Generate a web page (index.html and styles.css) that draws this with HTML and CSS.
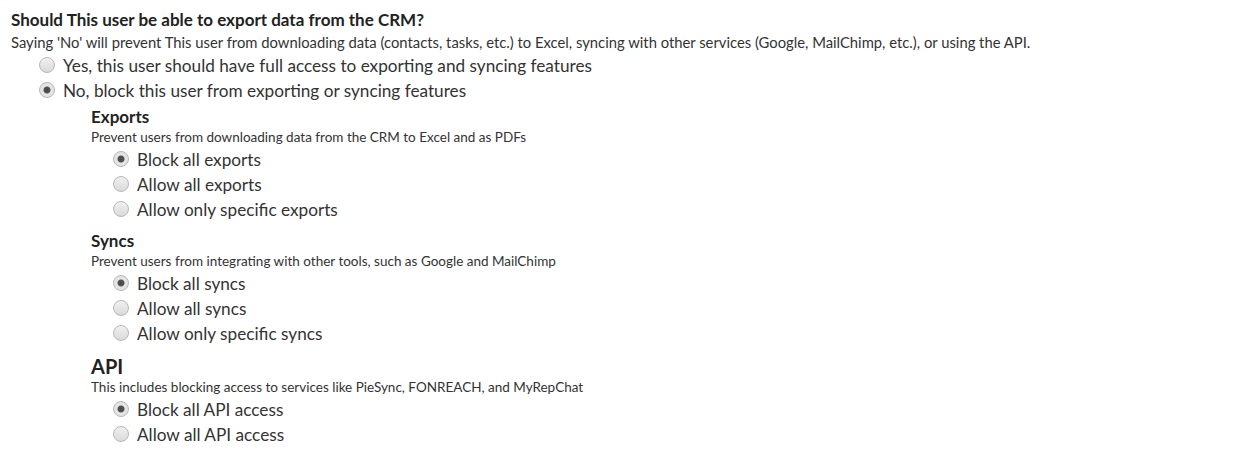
FILE: index.html
```html
<!DOCTYPE html>
<html lang="en">
<head>
  <meta charset="UTF-8">
  <link rel="stylesheet" href="styles.css">
  <title>Export permissions</title>
</head>
<body>
  <div class="question">
    <h1 class="title">Should This user be able to export data from the CRM?</h1>
    <p class="desc">Saying 'No' will prevent This user from downloading data (contacts, tasks, etc.) to Excel, syncing with other services (Google, MailChimp, etc.), or using the API.</p>
    <div class="options">
      <label class="option"><input type="radio" name="export"> Yes, this user should have full access to exporting and syncing features</label>
      <label class="option"><input type="radio" name="export" checked> No, block this user from exporting or syncing features</label>
    </div>

    <div class="details">
      <div class="section">
        <h2 class="sub">Exports</h2>
        <p class="subdesc">Prevent users from downloading data from the CRM to Excel and as PDFs</p>
        <div class="options">
          <label class="option"><input type="radio" name="exports" checked> Block all exports</label>
          <label class="option"><input type="radio" name="exports"> Allow all exports</label>
          <label class="option"><input type="radio" name="exports"> Allow only specific exports</label>
        </div>
      </div>
      <div class="section">
        <h2 class="sub">Syncs</h2>
        <p class="subdesc">Prevent users from integrating with other tools, such as Google and MailChimp</p>
        <div class="options">
          <label class="option"><input type="radio" name="syncs" checked> Block all syncs</label>
          <label class="option"><input type="radio" name="syncs"> Allow all syncs</label>
          <label class="option"><input type="radio" name="syncs"> Allow only specific syncs</label>
        </div>
      </div>
      <div class="section">
        <h2 class="sub big">API</h2>
        <p class="subdesc">This includes blocking access to services like PieSync, FONREACH, and MyRepChat</p>
        <div class="options">
          <label class="option"><input type="radio" name="api" checked> Block all API access</label>
          <label class="option"><input type="radio" name="api"> Allow all API access</label>
        </div>
      </div>
    </div>
  </div>
</body>
</html>
```

FILE: styles.css
```css
html, body {
  margin: 0;
  background: #fff;
  font-family: Lato, "Open Sans", Arial, sans-serif;
  color: #333;
}
.question {
  padding: 10px 11px;
}
.title {
  margin: 0;
  font-size: 17px;
  line-height: 20px;
  font-weight: 700;
  color: #222;
}
.desc {
  margin: 4px 0 0;
  font-size: 14.8px;
  line-height: 16px;
  color: #333;
}
.options {
  margin-top: 2.5px;
  padding-left: 28px;
}
.option {
  display: flex;
  align-items: center;
  height: 25px;
  font-size: 17.2px;
  color: #333;
}
.option input {
  -webkit-appearance: none;
  appearance: none;
  width: 16px;
  height: 16px;
  margin: 0 8px 0 0;
  border: 1px solid #b8b8b8;
  border-radius: 50%;
  background: linear-gradient(#f0f0f0, #dadada);
  box-sizing: border-box;
}
.option input:checked {
  background: radial-gradient(circle, #444 0, #555 3px, #e6e6e6 4px, #e0e0e0 100%);
}
.details {
  padding-left: 80px;
  margin-top: 4px;
}
.section {
  margin-bottom: 9px;
}
.sub {
  margin: 0;
  font-size: 17px;
  line-height: 20px;
  font-weight: 700;
  color: #222;
}
.sub.big {
  font-size: 20px;
  line-height: 22px;
}
.subdesc {
  margin: 1px 0 0;
  font-size: 13.5px;
  line-height: 18px;
  color: #333;
}
.section .options {
  margin-top: 1px;
  padding-left: 22px;
}
```
